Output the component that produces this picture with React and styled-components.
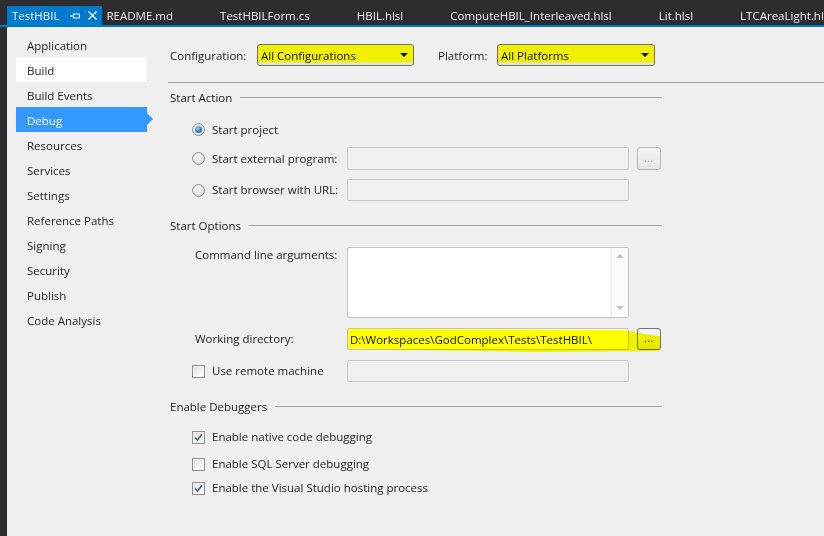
import React from 'react';
import styled, { createGlobalStyle } from 'styled-components';

const Global = createGlobalStyle`
  html, body { margin: 0; padding: 0; background: #2d2d30; }
  body { font-family: "Segoe UI", "Open Sans", "Noto Sans", sans-serif; font-size: 11.5px; color: #1e1e1e; }
  * { box-sizing: border-box; }
`;

const Frame = styled.div`
  width: 824px;
  height: 536px;
  overflow: hidden;
  display: flex;
  flex-direction: column;
  background: #2d2d30;
`;

const TabBar = styled.div`
  height: 27px;
  flex: none;
  display: flex;
  align-items: flex-end;
  padding-left: 7px;
  border-bottom: 2px solid #007acc;
  white-space: nowrap;
  overflow: hidden;
`;

const Tab = styled.div`
  height: 19px;
  flex: none;
  display: flex;
  align-items: center;
  padding: 0 ${p => (p.$active ? '5px' : '42px')} 0 5px;
  background: ${p => (p.$active ? '#007acc' : 'transparent')};
  color: #f1f1f1;
`;

const TabIcon = styled.svg`
  flex: none;
  margin-left: ${p => p.$gap}px;
`;

const Body = styled.div`
  flex: 1;
  display: flex;
  padding-left: 7px;
  min-height: 0;
`;

const Sidebar = styled.nav`
  width: 153px;
  flex: none;
  background: #efefef;
  padding: 5px 0 0 9px;
  display: flex;
  flex-direction: column;
`;

const NavItem = styled.div`
  position: relative;
  width: 131px;
  height: 25px;
  line-height: 23px;
  padding: 2px 0 0 11px;
  background: ${p => (p.$active ? '#3399ff' : p.$hover ? '#ffffff' : 'transparent')};
  color: ${p => (p.$active ? '#ffffff' : '#1e1e1e')};
`;

const NavArrow = styled.span`
  position: absolute;
  right: -6px;
  top: 6px;
  width: 0;
  height: 0;
  border-top: 6px solid transparent;
  border-bottom: 6px solid transparent;
  border-left: 6px solid #3399ff;
`;

const Content = styled.main`
  flex: 1;
  background: #efefef;
  padding: 17px 0 0 10px;
  display: flex;
  flex-direction: column;
  color: #1b1b1b;
`;

const ConfigRow = styled.div`
  display: flex;
  align-items: center;
  height: 22px;
`;

const ConfigLabel = styled.span`
  width: ${p => p.$w}px;
  margin-left: ${p => p.$ml || 0}px;
  flex: none;
`;

const Select = styled.div`
  width: ${p => p.$w}px;
  height: 22px;
  flex: none;
  border: 1px solid #707070;
  border-radius: 3px;
  background: linear-gradient(#f2f200 0, #f0f000 80%, #e6e6c0 92%, #e2e2e2 100%);
  display: flex;
  align-items: center;
  justify-content: space-between;
  padding: 0 5px 0 3px;
  color: #111;
`;

const Caret = styled.span`
  width: 0;
  height: 0;
  border-left: 4px solid transparent;
  border-right: 4px solid transparent;
  border-top: 4px solid #111;
`;

const Rule = styled.div`
  height: 1px;
  background: #a0a0a0;
  margin: 16px 0 0 -2px;
`;

const GroupHeader = styled.div`
  width: 492px;
  height: 16px;
  margin-top: ${p => p.$mt}px;
  display: flex;
  align-items: center;
  gap: 8px;
  &::after {
    content: '';
    flex: 1;
    height: 1px;
    background: #a0a0a0;
  }
`;

const FieldRow = styled.div`
  position: relative;
  display: grid;
  grid-template-columns: ${p => (p.$indent ? 144 : 147)}px 282px 24px;
  column-gap: 8px;
  align-items: ${p => (p.$top ? 'start' : 'center')};
  padding-left: ${p => (p.$indent ? 25 : 22)}px;
  height: ${p => p.$h || 23}px;
  margin-top: ${p => p.$mt}px;
`;

const Choice = styled.label`
  display: flex;
  align-items: center;
  gap: 7px;
  line-height: 16px;
  white-space: nowrap;
`;

const Radio = styled.span`
  width: 13px;
  height: 13px;
  flex: none;
  border-radius: 50%;
  border: 1px solid #8d8d8d;
  background: radial-gradient(circle at 40% 35%, #fdfdfd 0, #e4e4e4 60%, #cfcfcf 100%);
  display: flex;
  align-items: center;
  justify-content: center;
  &::after {
    content: '';
    display: ${p => (p.$on ? 'block' : 'none')};
    width: 7px;
    height: 7px;
    border-radius: 50%;
    background: radial-gradient(circle at 40% 35%, #9ed9f7 0, #3a8dc9 45%, #1c4f7c 100%);
  }
`;

const Check = styled.span`
  width: 13px;
  height: 13px;
  flex: none;
  border: 1px solid #8e8f8f;
  background: linear-gradient(135deg, #dcdcdc 0, #f4f4f4 60%, #ffffff 100%);
  box-shadow: inset 0 0 0 1px #f4f4f4;
  display: flex;
  align-items: center;
  justify-content: center;
`;

const TextBox = styled.div`
  height: ${p => p.$h || 23}px;
  border: 1px solid ${p => (p.$enabled ? '#c4c4c4' : '#c8c8c8')};
  border-radius: 2px;
  background: ${p => (p.$enabled ? '#ffffff' : '#f0f0f0')};
  display: flex;
  align-items: center;
  padding-left: 2px;
  overflow: hidden;
  white-space: nowrap;
  color: #111;
`;

const Area = styled.div`
  height: 71px;
  border: 1px solid #c4c4c4;
  border-radius: 2px;
  background: #ffffff;
  display: flex;
  justify-content: flex-end;
`;

const ScrollBar = styled.div`
  width: 17px;
  border-left: 1px solid #ececec;
  background: #fbfbfb;
  display: flex;
  flex-direction: column;
  justify-content: space-between;
  align-items: center;
  padding: 6px 0 7px;
`;

const Arrow = styled.span`
  width: 0;
  height: 0;
  border-left: 4px solid transparent;
  border-right: 4px solid transparent;
  ${p => (p.$up ? 'border-bottom: 4px solid #c2c2c2;' : 'border-top: 4px solid #c2c2c2;')}
`;

const DotsButton = styled.div`
  height: ${p => p.$h || 23}px;
  border: 1px solid ${p => (p.$enabled ? '#707070' : '#b5b5b5')};
  border-radius: 3px;
  background: linear-gradient(#f4f4f4, #e6e6e6);
  display: flex;
  align-items: center;
  justify-content: center;
  font-size: 10px;
  letter-spacing: 0.5px;
  color: ${p => (p.$enabled ? '#222' : '#a7a7a7')};
  padding-bottom: 2px;
`;

const Highlighter = styled.span`
  position: absolute;
  left: 178px;
  top: 1px;
  width: 312px;
  height: 23px;
  background: #ffff00;
  mix-blend-mode: multiply;
  clip-path: polygon(0 0, 88% 4%, 95% 22%, 100% 30%, 100% 96%, 60% 100%, 0 86%);
  pointer-events: none;
`;

const CheckRow = styled.div`
  padding-left: 22px;
  margin-top: ${p => p.$mt}px;
  height: 16px;
  display: flex;
  align-items: center;
`;

const tabs = ['README.md', 'TestHBILForm.cs', 'HBIL.hlsl', 'ComputeHBIL_Interleaved.hlsl', 'Lit.hlsl', 'LTCAreaLight.hlsl'];
const nav = ['Application', 'Build', 'Build Events', 'Debug', 'Resources', 'Services', 'Settings', 'Reference Paths', 'Signing', 'Security', 'Publish', 'Code Analysis'];

const Tick = () => (
  <svg width="9" height="9" viewBox="0 0 9 9">
    <path d="M1 4.5 L3.5 7 L8 1.2" fill="none" stroke="#4a5e86" strokeWidth="1.6" />
  </svg>
);

export default function App() {
  return (
    <Frame>
      <Global />
      <TabBar>
        <Tab $active>
          TestHBIL
          <TabIcon $gap={10} width="10" height="8" viewBox="0 0 10 8">
            <path d="M0 4 H3 M3.5 1 V7 M3.5 2 H9.5 V6 H3.5" fill="none" stroke="#fff" strokeWidth="1" />
          </TabIcon>
          <TabIcon $gap={8} width="9" height="9" viewBox="0 0 9 9">
            <path d="M0.5 0.5 L8.5 8.5 M8.5 0.5 L0.5 8.5" stroke="#fff" strokeWidth="1.4" />
          </TabIcon>
        </Tab>
        {tabs.map(t => (
          <Tab key={t}>{t}</Tab>
        ))}
      </TabBar>
      <Body>
        <Sidebar>
          {nav.map(n => (
            <NavItem key={n} $active={n === 'Debug'} $hover={n === 'Build'}>
              {n}
              {n === 'Debug' && <NavArrow />}
            </NavItem>
          ))}
        </Sidebar>
        <Content>
          <ConfigRow>
            <ConfigLabel $w={87}>Configuration:</ConfigLabel>
            <Select $w={157}>
              All Configurations
              <Caret />
            </Select>
            <ConfigLabel $w={59} $ml={24}>Platform:</ConfigLabel>
            <Select $w={158}>
              All Platforms
              <Caret />
            </Select>
          </ConfigRow>
          <Rule />

          <GroupHeader $mt={6}>Start Action</GroupHeader>
          <FieldRow $mt={13}>
            <Choice><Radio $on />Start project</Choice>
          </FieldRow>
          <FieldRow $mt={6}>
            <Choice><Radio />Start external program:</Choice>
            <TextBox />
            <DotsButton>...</DotsButton>
          </FieldRow>
          <FieldRow $mt={9} $h={22}>
            <Choice><Radio />Start browser with URL:</Choice>
            <TextBox $h={22} />
          </FieldRow>

          <GroupHeader $mt={16}>Start Options</GroupHeader>
          <FieldRow $indent $top $mt={14} $h={71}>
            <Choice>Command line arguments:</Choice>
            <Area>
              <ScrollBar>
                <Arrow $up />
                <Arrow />
              </ScrollBar>
            </Area>
          </FieldRow>
          <FieldRow $indent $mt={10} $h={22}>
            <Choice>Working directory:</Choice>
            <TextBox $enabled $h={22}>D:\Workspaces\GodComplex\Tests\TestHBIL\</TextBox>
            <DotsButton $enabled $h={22}>...</DotsButton>
            <Highlighter />
          </FieldRow>
          <FieldRow $mt={10} $h={22}>
            <Choice><Check />Use remote machine</Choice>
            <TextBox $h={22} />
          </FieldRow>

          <GroupHeader $mt={16}>Enable Debuggers</GroupHeader>
          <CheckRow $mt={15}>
            <Choice><Check><Tick /></Check>Enable native code debugging</Choice>
          </CheckRow>
          <CheckRow $mt={11}>
            <Choice><Check />Enable SQL Server debugging</Choice>
          </CheckRow>
          <CheckRow $mt={8}>
            <Choice><Check><Tick /></Check>Enable the Visual Studio hosting process</Choice>
          </CheckRow>
        </Content>
      </Body>
    </Frame>
  );
}
